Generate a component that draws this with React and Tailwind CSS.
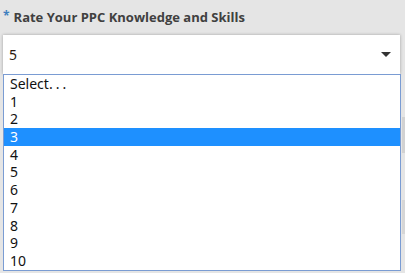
import { useState } from "react";

const options = ["Select...", "1", "2", "3", "4", "5", "6", "7", "8", "9", "10"];

export default function App() {
  const [hovered, setHovered] = useState(3);

  return (
    <div className="relative w-[405px] h-[273px] overflow-hidden bg-[#e5e5e5] font-['Open_Sans',sans-serif]">
      {/* stuff peeking out behind the open list */}
      <div className="absolute right-0 top-[117px] w-[3px] h-[36px] bg-[#d2d2d2]" />
      <div className="absolute right-0 top-[200px] w-[3px] h-[34px] bg-[#d6d6d6]" />

      <div className="flex items-center h-[35px] pl-[3px] pt-[1px]">
        <span className="text-[#3f7fbf] text-[12px] font-bold mr-[4px] -mt-[5px]">*</span>
        <span className="text-[#404040] text-[13px] font-bold">
          Rate Your PPC Knowledge and Skills
        </span>
      </div>

      <div className="ml-[3px] w-[397px] h-[39px] bg-white shadow-[0_0_3px_rgba(0,0,0,0.3)] flex items-center justify-between pl-[6px] pr-[9px]">
        <span className="text-[14px] text-[#2a1a12] font-['Noto_Sans',sans-serif]">5</span>
        <svg width="10" height="5" viewBox="0 0 10 5">
          <path d="M0 0 H10 L5 5 Z" fill="#333" />
        </svg>
      </div>

      <ul className="relative ml-[3px] w-[398px] border border-[#7a9cd3] bg-white font-['Noto_Sans',sans-serif] text-[14px]">
        {options.map((o, i) => (
          <li
            key={o}
            onMouseEnter={() => setHovered(i)}
            className={`h-[17.7px] leading-[17.7px] pl-[6px] ${
              i === hovered ? "bg-[#1e90ff] text-white" : "text-[#111]"
            }`}
          >
            {i === 0 ? (
              <>
                Select<span className="tracking-[3px]">...</span>
              </>
            ) : (
              o
            )}
          </li>
        ))}
      </ul>
    </div>
  );
}
